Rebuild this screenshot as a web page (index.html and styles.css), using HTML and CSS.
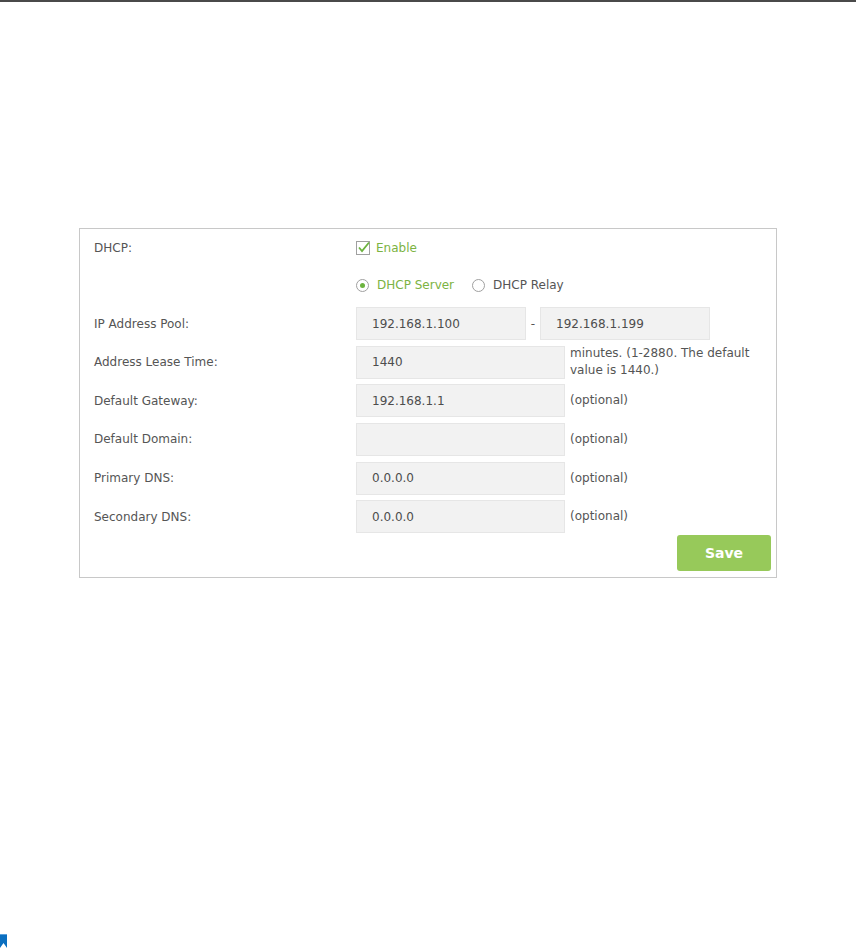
FILE: index.html
```html
<!DOCTYPE html>
<html>
<head>
  <title>DHCP Settings</title>
  <link rel="stylesheet" href="styles.css">
</head>
<body>

  <div class="topline"></div>

  <form class="panel">
    <div class="row first">
      <span class="label">DHCP:</span>
      <label class="check">
        <span class="box">
          <svg width="14" height="14" viewBox="0 0 14 14">
            <rect x="0.5" y="0.5" width="13" height="13" fill="#fff" stroke="#a0a0a0"/>
            <path d="M3 6.5 L6 10 L13 1.5" fill="none" stroke="#6cb33f" stroke-width="1.8"/>
          </svg>
        </span>
        <span class="green">Enable</span>
      </label>
    </div>

    <div class="row">
      <span class="label"></span>
      <label class="radio">
        <span class="dot on"></span>
        <span class="green">DHCP Server</span>
      </label>
      <label class="radio">
        <span class="dot"></span>
        <span>DHCP Relay</span>
      </label>
    </div>

    <div class="row">
      <span class="label">IP Address Pool:</span>
      <input class="field short" value="192.168.1.100">
      <span class="dash">-</span>
      <input class="field short" value="192.168.1.199">
    </div>

    <div class="row">
      <span class="label">Address Lease Time:</span>
      <input class="field" value="1440">
      <span class="note">minutes. (1-2880. The default value is 1440.)</span>
    </div>

    <div class="row">
      <span class="label">Default Gateway:</span>
      <input class="field" value="192.168.1.1">
      <span class="note">(optional)</span>
    </div>

    <div class="row">
      <span class="label">Default Domain:</span>
      <input class="field" value="">
      <span class="note">(optional)</span>
    </div>

    <div class="row">
      <span class="label">Primary DNS:</span>
      <input class="field" value="0.0.0.0">
      <span class="note">(optional)</span>
    </div>

    <div class="row">
      <span class="label">Secondary DNS:</span>
      <input class="field" value="0.0.0.0">
      <span class="note">(optional)</span>
    </div>

    <div class="actions">
      <button type="button" class="save">Save</button>
    </div>
  </form>

  <div class="marker"></div>

</body>
</html>
```

FILE: styles.css
```css
body {
  margin: 0;
  font-family: "DejaVu Sans", Verdana, sans-serif;
  font-size: 12px;
  color: #555;
  background: #fff;
  height: 948px;
  position: relative;
  overflow: hidden;
}

.topline {
  height: 2px;
  background: #4a4a4a;
}

.panel {
  margin: 226px 0 0 79px;
  width: 698px;
  box-sizing: border-box;
  border: 1px solid #c8c8c8;
  padding: 1px 5px 6px 14px;
  display: flex;
  flex-direction: column;
  gap: 5.6px;
}

.row {
  display: flex;
  align-items: center;
  height: 33px;
}

.row.first {
  padding-top: 3px;
  height: 30px;
}

.label {
  width: 262px;
  flex: none;
}

.green {
  color: #7cb342;
}

.check,
.radio {
  display: flex;
  align-items: center;
}

.box {
  display: flex;
  margin-right: 6px;
}

.radio {
  margin-right: 18px;
}

.dot {
  width: 11px;
  height: 11px;
  border: 1px solid #a0a0a0;
  border-radius: 50%;
  margin-right: 8px;
  position: relative;
}

.dot.on::after {
  content: "";
  position: absolute;
  left: 3px;
  top: 3px;
  width: 5px;
  height: 5px;
  border-radius: 50%;
  background: #6cb33f;
}

.field {
  width: 209px;
  height: 33px;
  box-sizing: border-box;
  border: 1px solid #e6e6e6;
  background: #f2f2f2;
  padding: 0 15px;
  font-family: inherit;
  font-size: 12px;
  color: #4d4d4d;
  outline: none;
}

.field.short {
  width: 170px;
}

.dash {
  width: 14px;
  text-align: center;
}

.note {
  margin-left: 5px;
  width: 195px;
  line-height: 17px;
}

.actions {
  display: flex;
  justify-content: flex-end;
  margin-top: -4px;
}

.save {
  width: 94px;
  height: 36px;
  border: none;
  border-radius: 3px;
  background: #97c95a;
  color: #fff;
  font-family: inherit;
  font-size: 14px;
  font-weight: bold;
  cursor: pointer;
}

.marker {
  position: absolute;
  left: 0;
  bottom: 0;
  width: 7px;
  height: 13px;
  background: #0b6fc0;
  border-top: 1px solid #5aa0dc;
  clip-path: polygon(0 0, 100% 0, 100% 100%, 50% 65%, 0 100%);
}
```
